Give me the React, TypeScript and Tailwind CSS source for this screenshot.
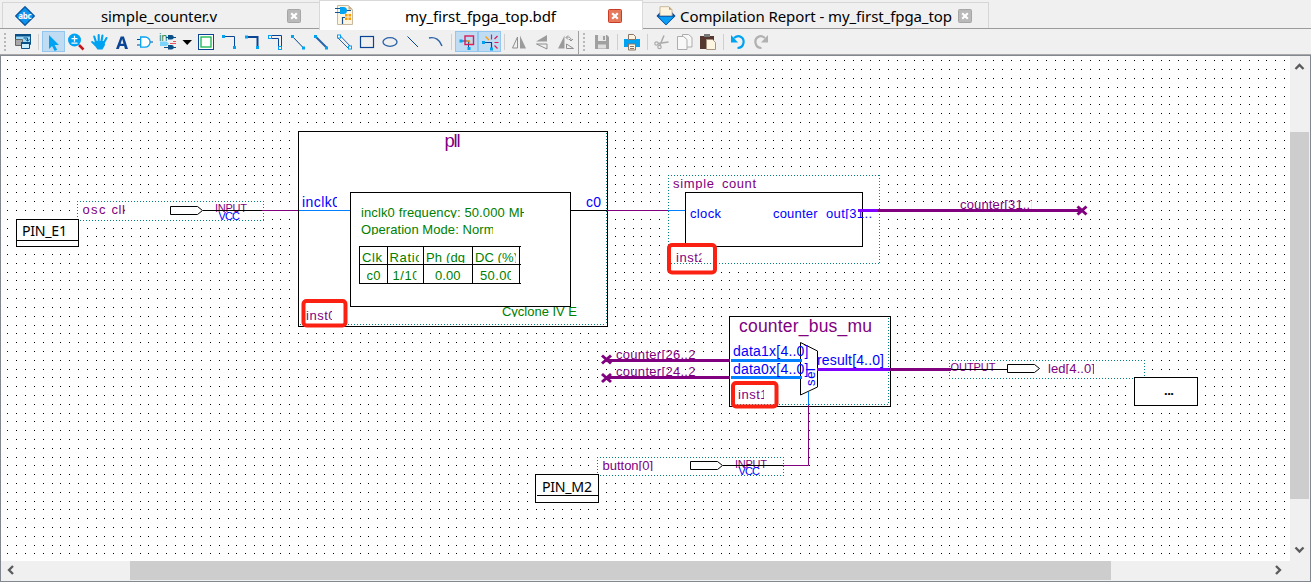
import type { ReactNode } from "react";

const NAVY = "#0a4494";
const SKY = "#00a2f2";
const PURPLE = "#800080";
const BLUE = "#0000ff";
const GREEN = "#008000";
const WIRE = "#0080ff";
const VIOLET = "#8000ff";

/* ---------- tabs ---------- */

function CloseBox({ active = false }: { active?: boolean }) {
  return (
    <svg className="h-[14px] w-[14px] shrink-0" viewBox="0 0 14 14">
      <rect x="0.5" y="0.5" width="13" height="13" rx="1" fill={active ? "#e57a5c" : "#b9b9b9"} stroke={active ? "#c83c28" : "#a6a6a6"} />
      <path d="M4.2 4.2l5.6 5.6M9.8 4.2l-5.6 5.6" stroke="#fff" strokeWidth="2.2" />
    </svg>
  );
}

function VerilogIcon() {
  return (
    <svg className="h-5 w-5" viewBox="0 0 20 20">
      <path d="M10 0.7L19.3 10 10 19.3 0.7 10z" fill="#0c93ee" stroke="#0a559f" strokeWidth="1.3" strokeLinejoin="round" />
      <text x="10" y="12.5" fontSize="8" fontWeight="700" fill="#fff" textAnchor="middle" textLength="13.5" className="font-['Noto_Sans',sans-serif]">abc</text>
    </svg>
  );
}

function SchematicIcon() {
  return (
    <svg className="h-5 w-5" viewBox="0 0 20 20">
      <path d="M2.5 0.5h11l4 4v15h-15z" fill="#fdf5e0" stroke="#c9b8a0" />
      <path d="M13.5 0.5v4h4z" fill="#c8ad92" />
      <path d="M0 3.5h6M0 7.500h6M11 5.500h5M7.500 19v-6.500h3" stroke="#17508f" strokeWidth="1.2" fill="none" />
      <path d="M5 2h3.500a3.500 3.500 0 010 7H5z" fill={SKY} />
      <path d="M10 9h6v6h-6z" fill="#ff9900" />
      <path d="M13 9v6M10 12h6" stroke="#fdf5e0" strokeWidth="1" />
    </svg>
  );
}

function ReportIcon() {
  return (
    <svg className="h-5 w-5" viewBox="0 0 20 20">
      <path d="M0.500 10L5 5h10l4.500 5L10 19.300z" fill="#0b4796" />
      <path d="M4 0.700h9l3 3V10H4z" fill="#fdf5e0" stroke="#c9b79b" />
      <path d="M13 0.700v3h3z" fill="#b79e83" />
      <path d="M1.500 10.300h17L10 18.800z" fill="#0ba0f5" stroke="#0b5cad" />
    </svg>
  );
}

function TabBar() {
  return (
    <div className="flex h-[30px] bg-[#f0f0f0] text-[15px] leading-5 text-black font-['Noto_Sans',sans-serif]">
      <div className="flex h-[29px] w-[319px] border-b border-[#9c9c9c] pl-[2px] pt-[2px]">
        <div className="flex w-[317px] items-center border-l border-t border-[#d6d6d6] pl-3">
          <div className="w-[86px]"><VerilogIcon /></div>
          <span className="w-[186px] whitespace-nowrap pt-[3px]">
            <svg className="block h-5 w-[130px] overflow-visible"><text x="0" y="15" textLength="116">simple_counter.v</text></svg>
          </span>
          <CloseBox />
        </div>
      </div>
      <div className="flex h-[30px] w-[324px] items-center border-x border-t border-[#d9d9d9] bg-white pl-[15px]">
        <div className="w-[70px] pb-[2px]"><SchematicIcon /></div>
        <span className="w-[203px]">
          <svg className="block h-5 w-[160px] overflow-visible"><text x="0" y="15.500" textLength="151">my_first_fpga_top.bdf</text></svg>
        </span>
        <CloseBox active />
      </div>
      <div className="flex h-[29px] flex-1 border-b border-[#9c9c9c] pt-[2px]">
        <div className="flex w-[346px] items-center border-r border-t border-[#d6d6d6] pl-[13px]">
          <div className="w-[24px]"><ReportIcon /></div>
          <span className="w-[278px] pt-[3px]">
            <svg className="block h-5 w-[275px] overflow-visible"><text x="0" y="15" textLength="272">Compilation Report - my_first_fpga_top</text></svg>
          </span>
          <CloseBox />
        </div>
      </div>
    </div>
  );
}

/* ---------- toolbar ---------- */

function Tool({ children, on = false }: { children: ReactNode; on?: boolean }) {
  return (
    <div className={on ? "h-[21px] w-[23px] bg-[#bfdcf3] outline outline-1 -outline-offset-1 outline-[#93c7ef]" : "h-[21px] w-[23px]"}>
      <svg className="block h-[21px] w-[23px] overflow-visible" viewBox="0 0 23 21" fill="none">{children}</svg>
    </div>
  );
}

function Gap({ className }: { className: string }) {
  return (
    <div className={"flex h-[21px] items-center justify-center " + className}>
      <div className="h-4 w-px bg-[#cfcfcf]" />
    </div>
  );
}

function Grip() {
  return (
    <div className="flex h-[21px] w-[2px] flex-col justify-center gap-[2px]">
      {[0, 1, 2, 3, 4].map((i) => <div key={i} className="h-[2px] w-[2px] bg-[#b8b8b8]" />)}
    </div>
  );
}

const Ends = ({ p, hollow = false }: { p: number[][]; hollow?: boolean }) => (
  <>{p.map(([x, y]) => <rect key={x} x={x - 1.5} y={y - 1.5} width="3" height="3" fill={hollow ? "#fff" : SKY} stroke={SKY} strokeWidth={hollow ? 1 : 0} />)}</>
);

function Toolbar() {
  return (
    <div className="flex h-6 items-start bg-[#f0f0f0] pt-px">
      <div className="w-3 pl-1"><Grip /></div>
      <Tool>
        <path d="M3.500 3.500h15v10h-15z" fill="#9bdcfb" stroke="#0a4f86" />
        <path d="M3 3h16v2.500H3z" fill="#0a4f86" />
        <path d="M3.500 8.500h7v6h-7z" fill="#a8a8a8" stroke="#666" />
        <path d="M9.500 11.500h8v6h-8z" fill="#c9eefd" stroke="#0a4f86" />
        <path d="M9 11h9v2H9z" fill="#0a4f86" />
        <path d="M11.500 7h4v3M13.500 8.500l2 1.500 2-1.500" stroke="#0a4f86" />
      </Tool>
      <Gap className="w-[7px]" />
      <Tool on><path d="M7 4v14l3-3 2.700 5 2.500-1.300-2.600-4.700H17z" fill={SKY} /></Tool>
      <Tool>
        <path d="M14 14l4.500 4.500" stroke="#c4161c" strokeWidth="2.500" />
        <circle cx="9.500" cy="9" r="6.500" fill={SKY} />
        <path d="M9.500 4.700v6M6.500 7.700h6M6.500 12.200h6" stroke="#fff" strokeWidth="1.300" />
      </Tool>
      <Tool>
        <path d="M8 11L6.200 5.500M10.700 10V4M13.500 10l1-5.500M16 11.500l2.500-4.500M7.500 14L4.200 11" stroke={SKY} strokeWidth="2.100" strokeLinecap="round" />
        <path d="M7 10h9.500l.5 4-2.500 4.500h-5L5.500 13z" fill={SKY} />
      </Tool>
      <Tool><path d="M5 18L9.700 5.500h3.200L17 18h-3l-.9-3H8.900l-1.100 3zm4.600-5.200h2.900L11.200 8z" fill={NAVY} /></Tool>
      <Tool>
        <path d="M3 8.500h4M3 14h4M16 11h3" stroke={NAVY} />
        <path d="M6.700 6H11a5.100 5.100 0 010 10.200H6.700z" stroke={SKY} strokeWidth="1.300" fill="#fff" />
      </Tool>
      <Tool>
        <text x="2" y="10" fontSize="10" textLength="8.500" fill="#16823a" className="font-['Noto_Sans',sans-serif]">in</text>
        <path d="M11 4h3.500a2.300 2.300 0 010 4.600H11zM11 14h3.500a2.300 2.300 0 010 4.600H11z" fill="#0a4f86" />
        <path d="M3 10.500h6.500l2.500 2-2.500 2.500H3z" fill="#79d3fa" />
        <path d="M9 6.500h2M16 6.500h3M7 16.500h4M16 16.500h3" stroke="#0a4f86" /><path d="M13 12.500h6M16 10.500h3" stroke="#e8545e" />
      </Tool>
      <div className="h-[21px] w-[15px]">
        <svg className="block h-[21px] w-[15px]" viewBox="0 0 15 21"><path d="M2.500 9h9.500L7.200 14z" fill="#000" /></svg>
      </div>
      <Tool><rect x="3.500" y="3.500" width="15" height="15" fill="#fff" stroke={NAVY} /><rect x="6" y="6" width="10" height="10" stroke="#10b548" strokeWidth="1.300" /></Tool>
      <Tool><path d="M5 5.500h11.500V17" stroke={NAVY} /><Ends p={[[5.500, 5.500], [16.500, 16.500]]} /></Tool>
      <Tool><path d="M5 6h11.500V17" stroke={NAVY} strokeWidth="2" /><Ends p={[[5.500, 6], [16.500, 16.500]]} /></Tool>
      <Tool><path d="M6 4.500h11.500v13M6 7.500h8.500v10" stroke={NAVY} /><Ends hollow p={[[6, 6], [16, 17]]} /></Tool>
      <Tool><path d="M5 5l11.500 12" stroke={NAVY} /><Ends p={[[5.500, 5.500], [16.500, 17]]} /></Tool>
      <Tool><path d="M5 5l12 12" stroke="#2a61a8" strokeWidth="2" /><Ends p={[[5.500, 5.500], [16.500, 17]]} /></Tool>
      <Tool><path d="M7 4.500l11 11.500M4.500 6.500L16 18" stroke="#2a61a8" /><Ends hollow p={[[6, 5.500], [17, 16.500]]} /></Tool>
      <Tool><rect x="4.500" y="5.500" width="13" height="11" stroke={NAVY} strokeWidth="1.200" /></Tool>
      <Tool><ellipse cx="11" cy="11" rx="7" ry="4.300" stroke="#2a61a8" strokeWidth="1.300" /></Tool>
      <Tool><path d="M5.500 5.500l10.500 10.500" stroke={NAVY} /></Tool>
      <Tool><path d="M4 7c6-1.500 11 2 13 8" stroke="#2a61a8" strokeWidth="1.400" /></Tool>
      <Gap className="w-[7px]" />
      <Tool on>
        <path d="M6 10h7.500v7" stroke={NAVY} /><rect x="10" y="5" width="8.500" height="8.500" stroke="#df1a55" strokeWidth="1.400" /><path d="M11.500 10h3v3" stroke="#ff9900" strokeWidth="1.400" />
        <rect x="4.500" y="8.500" width="3" height="3" fill={SKY} /><rect x="12.500" y="16" width="3" height="3" fill={SKY} />
      </Tool>
      <Tool on>
        <path d="M5 11.500h8.500V18" stroke={NAVY} strokeWidth="1.200" />
        <path d="M13.500 3.500v5M16.500 8l3-3M16.500 11.500h4M16.500 14.500l3 3" stroke="#df1a55" strokeWidth="1.200" /><path d="M7.500 5.500l3.500 3.500" stroke="#ff9900" strokeWidth="1.200" />
        <Ends p={[[5.500, 11.500], [13.500, 18]]} />
      </Tool>
      <Gap className="w-[7px]" />
      <Tool><path d="M9.500 6v11H4.500z" stroke="#8f8f8f" /><path d="M12 4.500l6 13h-6z" fill="#9b9b9b" /></Tool>
      <Tool><path d="M5 10.500L16 4v6.500z" fill="#9b9b9b" /><path d="M5.500 13h10.500v5z" stroke="#8f8f8f" /></Tool>
      <Tool><path d="M10.500 4.500v13H4z" fill="#9b9b9b" /><path d="M12.500 13v4.500h7z" stroke="#8f8f8f" /><path d="M12.500 6.500c3-1 4.500 0 4.500 3M15 8l2 2 2-2M14 4.500l-2 2 2 2" stroke="#8f8f8f" /></Tool>
      <div className="flex h-[24px] w-[14px] gap-[4px] pl-px">
        <div className="h-full w-px bg-[#9f9f9f]" />
        <Grip />
      </div>
      <Tool><path d="M4 4h12l2 2v12H4z" fill="#a0a0a0" /><path d="M7 4h8v6H7z" fill="#eaeaea" /><path d="M12 5h2v4h-2z" fill="#a0a0a0" /><path d="M7 13.500h8v4H7z" fill="#ddd" /></Tool>
      <Gap className="w-[7px]" />
      <Tool><path d="M3 8h16v8H3z" fill={SKY} /><path d="M7.500 3.500h5l2 2V8.500h-7zM7.500 13h7v6h-7z" fill="#fdf5e0" stroke="#8c7466" /><path d="M9 15.500h4M9 17.500h4" stroke="#8c7466" /></Tool>
      <Gap className="w-[6px]" />
      <Tool><path d="M8 12.500l10.500-1.500M14 4.500l-4 9.500" stroke="#aaa" strokeWidth="1.500" /><circle cx="6.500" cy="12.500" r="1.700" stroke="#aaa" strokeWidth="1.200" /><circle cx="9.500" cy="16" r="1.700" stroke="#aaa" strokeWidth="1.200" /></Tool>
      <Tool><path d="M9.500 3.500h6l3.500 3V16H9.500z" fill="#f8f8f8" stroke="#adadad" /><path d="M4.500 5.500h6l3.500 3v10H4.500z" fill="#f8f8f8" stroke="#adadad" /></Tool>
      <Tool><path d="M4 5h14v13H4z" fill="#55372f" /><path d="M8 3h6v3H8z" fill="#777" /><path d="M10.500 8.500h6l3 3v7h-9z" fill="#fdf5e0" stroke="#a89480" /></Tool>
      <Gap className="w-[8px]" />
      <Tool><path d="M7 7c5-4 10.500-.5 9.500 5-.6 3-3 5-6 5" stroke={SKY} strokeWidth="2.200" /><path d="M4 4v7.500h7z" fill={SKY} /></Tool>
      <Tool><path d="M15 7C10 3 4.500 6.500 5.500 12c.6 3 3 5 6 5" stroke="#b1b1b1" strokeWidth="2.200" /><path d="M18 4v7.500h-7z" fill="#b1b1b1" /></Tool>
    </div>
  );
}

/* ---------- schematic ---------- */

type LabelProps = { x: number; y: number; w: number; c: string; s?: number; clip?: number; drop?: number; ui?: boolean; children: string };

function Label({ x, y, w, c, s = 13, clip, drop = 6, ui = false, children }: LabelProps) {
  return (
    <svg x={x} y={y - 20} width={clip ?? w + 4} height={20 + drop} overflow="hidden">
      <text x="0" y="20" fontSize={s} fill={c} textLength={w} className={ui ? "font-['Noto_Sans',sans-serif]" : "font-['Liberation_Sans',Arial,sans-serif]"}>{children}</text>
    </svg>
  );
}

const Box = ({ x, y, x2, y2 }: { x: number; y: number; x2: number; y2: number }) => (
  <rect x={x + 0.5} y={y + 0.5} width={x2 - x} height={y2 - y} fill="#fff" stroke="#000" />
);
const Dotted = ({ x, y, x2, y2 }: { x: number; y: number; x2: number; y2: number }) => (
  <>
    <rect x={x} y={y} width={x2 - x + 1} height={y2 - y + 1} fill="#fff" />
    <path d={`M${x} ${y + 0.5}H${x2 + 1}M${x} ${y2 + 0.5}H${x2 + 1}M${x + 0.5} ${y}V${y2}M${x2 + 0.5} ${y}V${y2}`} stroke="#008080" strokeDasharray="1 2" />
  </>
);
const Line = ({ d, c, w = 1 }: { d: string; c: string; w?: number }) => <path d={d} stroke={c} strokeWidth={w} fill="none" />;
const Ring = ({ x, y, x2, y2 }: { x: number; y: number; x2: number; y2: number }) => (
  <rect x={x + 2} y={y + 2} width={x2 - x - 4} height={y2 - y - 4} rx="3" fill="none" stroke="#fb2112" strokeWidth="4" />
);
const Cross = ({ x, y }: { x: number; y: number }) => <path d={`M${x - 4.5} ${y - 4}l9 8M${x + 4.5} ${y - 4}l-9 8`} stroke={PURPLE} strokeWidth="3" />;
const Port = ({ x, y }: { x: number; y: number }) => <path d={`M${x + 0.5} ${y - 3.5}h27l5 4-5 4h-27z`} fill="#fff" stroke="#000" />;

const GRID = Array.from({ length: 57 }, (_, r) =>
  Array.from({ length: 146 }, (_, c) => `M${Math.floor(7.99 + 8.803 * c)} ${Math.floor(60.8 + 8.807 * r)}h1v1h-1z`).join(""),
).join("");

function Schematic() {
  return (
    <svg className="block h-[505px] w-[1289px] shrink-0 bg-white" viewBox="1 56 1289 505">
      <path d={GRID} fill="#000" shapeRendering="crispEdges" />

      <Dotted x={77} y={201} x2={263} y2={220} />
      <Label x={82.5} y={214} w={23} drop={1} c={PURPLE}>osc</Label>
      <Label x={111.5} y={214} w={17} clip={13.5} drop={1} c={PURPLE}>clk</Label>
      <Label x={215} y={212} w={32} s={11} c={PURPLE}>INPUT</Label>
      <Label x={218.5} y={220} w={21.5} s={11} c={BLUE}>VCC</Label>
      <Line d="M203 210.5H262" c="#000" /><Line d="M262 210.5H298" c={PURPLE} />
      <Port x={170} y={210} />
      <Box x={16} y={219} x2={78} y2={246} /><Line d="M16 240.5H78" c="#000" />
      <Label x={22} y={236} w={45} s={14.2} c="#000" ui>PIN_E1</Label>

      <Box x={298} y={131} x2={607} y2={326} />
      <path d="M606.5 133V325M300 324.5H606" stroke="#008080" strokeDasharray="1 2" />
      <Label x={444.5} y={147} w={16} s={18.5} c={PURPLE}>pll</Label>
      <Label x={302} y={207} w={38} clip={35} s={14} c={BLUE}>inclk0</Label>
      <Label x={586} y={207} w={15} s={14} c={BLUE}>c0</Label>
      <Box x={350} y={192} x2={570} y2={306} />
      <Line d="M299 210.5H350" c={WIRE} /><Line d="M571 210.5H607" c="#000" />
      <Label x={361} y={217} w={168} clip={163} drop={1} c={GREEN}>inclk0 frequency: 50.000 MH</Label>
      <Label x={361} y={234} w={133.5} clip={132} drop={1} c={GREEN}>Operation Mode: Norm</Label>
      <Line d="M359 246.5H521M359 264.5H521M359 283.5H521M359.5 246V284M387.5 246V284M423.5 246V284M472.5 246V284M519.5 246V284" c="#000" />
      <Label x={362} y={262} w={20} c={GREEN}>Clk</Label>
      <Label x={389.5} y={262} w={33} clip={29.5} c={GREEN}>Ratio</Label>
      <Label x={426} y={262} w={39} drop={1} c={GREEN}>Ph (dg</Label>
      <Label x={475} y={262} w={43} clip={41} drop={1} c={GREEN}>DC (%)</Label>
      <Label x={366.5} y={280} w={14} c={GREEN}>c0</Label>
      <Label x={392.5} y={280} w={27} clip={24} c={GREEN}>1/10</Label>
      <Label x={435} y={280} w={25.5} c={GREEN}>0.00</Label>
      <Label x={480} y={280} w={34} clip={31} c={GREEN}>50.00</Label>
      <Label x={502} y={316} w={75} drop={1} c={GREEN}>Cyclone IV E</Label>
      <Label x={306} y={320} w={29.5} clip={26} c={PURPLE}>inst0</Label>
      <Ring x={301.5} y={299} x2={347.5} y2={327.5} />

      <Dotted x={668} y={175} x2={879} y2={263} />
      <Line d="M607 210.5H668" c={PURPLE} /><Line d="M668 210.5H685" c={WIRE} />
      <Label x={673} y={188} w={41} drop={2} c={PURPLE}>simple</Label>
      <Label x={722} y={188} w={34} drop={2} c={PURPLE}>count</Label>
      <Box x={685} y={192} x2={862} y2={246} />
      <Label x={690} y={218} w={31} c={BLUE}>clock</Label>
      <Label x={773} y={218} w={44.5} drop={1} c={BLUE}>counter</Label>
      <Label x={826} y={218} w={50} clip={47} drop={1} c={BLUE}>out[31..]</Label>
      <Line d="M858 210.5H878" c={VIOLET} w={3} />
      <Label x={960} y={209} w={74} clip={72} drop={1} c={PURPLE}>counter[31..]</Label>
      <Line d="M878 210.5H1082" c={PURPLE} w={3} /><Cross x={1082} y={210.5} />
      <Label x={676} y={262} w={29.5} clip={25.5} c={PURPLE}>inst2</Label>
      <Ring x={667} y={243} x2={717} y2={274.5} />

      <Box x={729} y={316} x2={890} y2={406} />
      <path d="M888.5 318V405M731 404.5H888" stroke="#008080" strokeDasharray="1 2" />
      <Label x={739} y={332} w={133} s={17.5} c={PURPLE}>counter_bus_mu</Label>
      <Label x={616} y={359} w={79.5} drop={1} c={PURPLE}>counter[26..2</Label>
      <Label x={616} y={376} w={79.5} drop={1} c={PURPLE}>counter[24..2</Label>
      <Line d="M606 360.5H730M606 377.5H730" c={PURPLE} w={3} />
      <Line d="M731 360.5H801M731 377.5H801" c={WIRE} w={3} />
      <Cross x={606.5} y={359.5} /><Cross x={606.5} y={378} />
      <path d="M800.5 342.5L817.5 351V387L800.5 395z" fill="#fff" stroke="#000" />
      <Line d="M800 360.5H802M800 377.5H802" c={WIRE} w={3} />
      <Label x={733} y={356} w={75.5} s={14} c={BLUE}>data1x[4..0]</Label>
      <Label x={733} y={374} w={75.5} s={14} c={BLUE}>data0x[4..0]</Label>
      <Label x={817} y={364.5} w={67} s={14} c={BLUE}>result[4..0]</Label>
      <text transform="translate(815 386) rotate(-90)" fontSize="13" textLength="18" fill={BLUE} className="font-['Liberation_Sans',Arial,sans-serif]">sel</text>
      <Line d="M817 369.5H889" c={VIOLET} w={3} /><Line d="M808.5 392V405" c={WIRE} />
      <Label x={738} y={399} w={29.5} clip={26} c={PURPLE}>inst1</Label>
      <Ring x={731} y={381} x2={778.5} y2={408.5} />

      <Dotted x={949} y={360} x2={1144} y2={378} />
      <Label x={950.5} y={371} w={45} s={11} c={PURPLE}>OUTPUT</Label>
      <Line d="M889 369.5H951" c={PURPLE} w={3} /><Line d="M951 369.5H1007" c="#000" />
      <Port x={1007} y={368} />
      <Label x={1048} y={373} w={47} clip={46} drop={1} c={PURPLE}>led[4..0]</Label>
      <Box x={1134} y={377} x2={1197} y2={405} />
      <text x="1164" y="395" fontSize="13" fontWeight="700" textLength="10" className="font-['Noto_Sans',sans-serif]">...</text>

      <Dotted x={597} y={457} x2={783} y2={475} />
      <Label x={602.5} y={470} w={50.5} drop={1} c={PURPLE}>button[0]</Label>
      <Label x={735} y={468} w={32} s={11} c={PURPLE}>INPUT</Label>
      <Label x={738.5} y={475} w={21.5} s={11} c={BLUE}>VCC</Label>
      <Line d="M723 465.5H783" c="#000" /><Line d="M783 465.5H808.5V405" c={PURPLE} />
      <Port x={690} y={465} />
      <Box x={535} y={474} x2={598} y2={502} /><Line d="M537 495.5H598" c="#000" />
      <Label x={542} y={492} w={50} s={14.2} c="#000" ui>PIN_M2</Label>
    </svg>
  );
}

function Chevron({ d }: { d: string }) {
  return (
    <svg className="h-5 w-5 shrink-0" viewBox="0 0 20 20" fill="none">
      <path d={d} stroke="#5a5a5a" strokeWidth="2.3" />
    </svg>
  );
}

export default function App() {
  return (
    <div className="flex h-[582px] w-[1311px] flex-col overflow-hidden bg-[#f0f0f0]">
      <TabBar />
      <Toolbar />
      <div className="flex h-[528px] flex-col border-t border-[#a8a8a8]">
        <div className="flex flex-1 flex-col border border-[#828790]">
          <div className="flex h-[505px]">
            <Schematic />
            <div className="flex w-5 flex-col items-center bg-[#f0f0f0]">
              <Chevron d="M5.5 13L9.5 9l4 4" />
              <div className="mt-14 h-[367px] w-[19px] self-start bg-[#cdcdcd]" />
              <div className="mt-[41px]"><Chevron d="M5.5 7.500l4 4 4-4" /></div>
            </div>
          </div>
          <div className="flex h-5">
            <div className="w-[129px]"><Chevron d="M12 5L8 9l4 4" /></div>
            <div className="h-[19px] w-[981px] bg-[#cdcdcd]" />
            <div className="pl-[157px]"><Chevron d="M8 5l4 4-4 4" /></div>
          </div>
        </div>
      </div>
    </div>
  );
}
